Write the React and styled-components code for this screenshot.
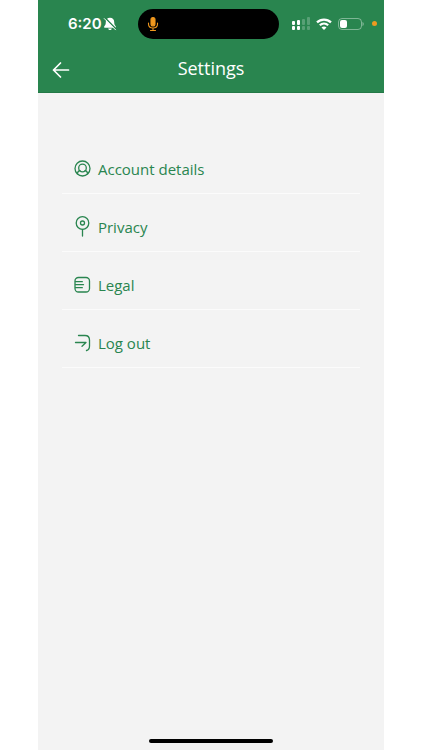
import React from "react";
import styled, { createGlobalStyle } from "styled-components";

const GlobalStyle = createGlobalStyle`
  * { box-sizing: border-box; }
  body { margin: 0; background: #ffffff; }
`;

const green = "#29854f";

const Page = styled.div`
  min-height: 100vh;
  padding: 0 9%;
  display: flex;
  background: #ffffff;
  font-family: "Open Sans", "Noto Sans", sans-serif;
`;

const Screen = styled.div`
  flex: 1;
  display: flex;
  flex-direction: column;
  background: #f3f3f3;
`;

const Header = styled.header`
  background: ${green};
  border-bottom: 1px solid #237846;
  color: #ffffff;
`;

const StatusBar = styled.div`
  display: grid;
  grid-template-columns: 1fr auto 1fr;
  align-items: center;
  height: 47px;
  padding-right: 5px;
`;

const Clock = styled.div`
  display: flex;
  align-items: center;
  gap: 1px;
  padding-left: 30px;
  font: 600 15px/20px Inter, sans-serif;
`;

const Island = styled.div`
  width: 141px;
  height: 30px;
  padding-left: 9px;
  display: flex;
  align-items: center;
  border-radius: 15px;
  background: #000000;
`;

const Indicators = styled.div`
  display: flex;
  align-items: center;
  justify-content: flex-end;
  gap: 6px;
`;

const RecordingDot = styled.span`
  width: 5px;
  height: 5px;
  margin: 0 2px;
  border-radius: 50%;
  background: #ee9a20;
`;

const TitleBar = styled.div`
  display: grid;
  grid-template-columns: 46px 1fr 46px;
  align-items: center;
  height: 45px;
`;

const BackButton = styled.button`
  display: flex;
  align-items: center;
  justify-content: center;
  height: 44px;
  padding: 0;
  border: 0;
  background: none;
  color: inherit;
  cursor: pointer;
`;

const Title = styled.h1`
  margin: 0;
  padding-bottom: 4px;
  font-size: 18px;
  font-weight: 400;
  line-height: 24px;
  text-align: center;
`;

const Menu = styled.nav`
  flex: 1;
  padding: 43px 24px 0;
`;

const MenuItem = styled.button`
  display: flex;
  align-items: center;
  gap: 7px;
  width: 100%;
  height: 58px;
  padding: 8px 0 0 12px;
  border: 0;
  border-bottom: 1px solid #fbfbfb;
  background: none;
  color: ${green};
  font: inherit;
  font-size: 15px;
  line-height: 20px;
  text-align: left;
  cursor: pointer;
`;

const Line = styled.svg.attrs({ fill: "none", stroke: "currentColor", "aria-hidden": true })`
  display: block;
  flex: none;
  stroke-width: ${(p) => p.$weight || 1.3};
  stroke-linecap: round;
  stroke-linejoin: round;
`;

const Solid = styled.svg.attrs({ fill: "currentColor", "aria-hidden": true })`
  display: block;
  flex: none;
`;

const HomeIndicator = styled.div`
  align-self: center;
  width: 124px;
  height: 4px;
  margin-bottom: 7px;
  border-radius: 2px;
  background: #000000;
`;

const BellOff = () => (
  <Solid width="14" height="14" viewBox="0 0 14 14">
    <path d="M7 .8c-2.700 0-4.200 1.900-4.200 4.300 0 2.400-.6 3.300-1.600 4.400-.4.500-.1 1.200.5 1.200h10.600c.6 0 .9-.7.5-1.200-1-1.100-1.600-2-1.600-4.400 0-2.400-1.500-4.300-4.200-4.300zM5.200 11.400c.2 1.100.9 1.700 1.800 1.700s1.600-.6 1.800-1.700z" />
    <path d="M2.200 1l10.800 11" stroke={green} strokeWidth="1.600" />
    <path d="M1.300 1.600l11.200 11.200" stroke="currentColor" strokeWidth="1" strokeLinecap="round" />
  </Solid>
);

const Microphone = () => (
  <Line width="12" height="16" viewBox="0 0 12 16" color="#f0981e" $weight={1.1}>
    <rect x="4" y="1.500" width="4" height="8.500" rx="2" fill="currentColor" />
    <path d="M1.500 7v1c0 2.700 1.900 4 4.500 4s4.500-1.300 4.500-4V7M6 12v2.500M3.500 14.500h5" />
  </Line>
);

const Signal = () => (
  <Solid width="18" height="14" viewBox="0 0 18 14">
    <rect x="0" y="4" width="3" height="4" rx="1" />
    <rect x="5" y="3" width="3" height="5" rx="1" />
    <rect x="0" y="9" width="3" height="4" rx="1" />
    <rect x="5" y="9" width="3" height="4" rx="1" />
    <g opacity=".22">
      <rect x="10" y="2" width="3" height="6" rx="1" />
      <rect x="15" y="0" width="3" height="8" rx="1" />
      <rect x="10" y="9" width="3" height="4" rx="1" />
      <rect x="15" y="9" width="3" height="4" rx="1" />
    </g>
  </Solid>
);

const Wifi = () => (
  <Line width="16" height="12" viewBox="0 0 16 12" $weight={2.2}>
    <path d="M1 4.400c3.900-3.800 10.100-3.800 14 0M3.800 7.300c2.400-2.200 6-2.200 8.400 0" strokeLinecap="butt" />
    <path d="M8 12L5.500 9.500c1.400-1.200 3.600-1.200 5 0z" fill="currentColor" stroke="none" />
  </Line>
);

const Battery = () => (
  <Solid width="26" height="12" viewBox="0 0 26 12">
    <rect x=".5" y=".5" width="23" height="11" rx="3.500" fill="none" stroke="currentColor" opacity=".4" />
    <rect x="2" y="2" width="7" height="8" rx="2" />
    <path d="M24.500 4c1.600.5 1.600 3.500 0 4z" opacity=".45" />
  </Solid>
);

const BackArrow = () => (
  <Line width="18" height="18" viewBox="0 0 18 18" $weight={1.7}>
    <path d="M16.500 9H1.500M8.500 2l-7 7 7 7" />
  </Line>
);

const AccountIcon = () => (
  <Line width="17" height="22" viewBox="0 0 17 22">
    <circle cx="8.500" cy="10.500" r="7.500" />
    <circle cx="8.500" cy="10" r="3.800" />
    <path d="M3.400 15.800c.2-1.800 1.100-2.900 2.600-3.100M13.600 15.800c-.2-1.800-1.100-2.900-2.600-3.100" />
  </Line>
);

const PrivacyIcon = () => (
  <Line width="17" height="22" viewBox="0 0 17 22">
    <circle cx="8.500" cy="7" r="6.300" />
    <circle cx="8.500" cy="7" r="2" />
    <path d="M8.500 13.500v6.500" />
  </Line>
);

const LegalIcon = () => (
  <Line width="17" height="22" viewBox="0 0 17 22">
    <rect x="1" y="3.500" width="14.500" height="14.500" rx="3.500" />
    <path d="M1.500 7.700h6.800M1.500 10.700h8M1.500 13.700h6.800" />
  </Line>
);

const LogoutIcon = () => (
  <Line width="17" height="22" viewBox="0 0 17 22">
    <path d="M4.500 3.500h6.500c3 0 4.500 1.500 4.500 4.500v6c0 2.500-1 4-3 4.500M1.500 10.500h10.500l-4 3.800" />
  </Line>
);

const items = [
  { label: "Account details", Icon: AccountIcon },
  { label: "Privacy", Icon: PrivacyIcon },
  { label: "Legal", Icon: LegalIcon },
  { label: "Log out", Icon: LogoutIcon },
];

export default function App() {
  return (
    <>
      <GlobalStyle />
      <Page>
        <Screen>
          <Header>
            <StatusBar>
              <Clock>
                6:20
                <BellOff />
              </Clock>
              <Island>
                <Microphone />
              </Island>
              <Indicators>
                <Signal />
                <Wifi />
                <Battery />
                <RecordingDot />
              </Indicators>
            </StatusBar>
            <TitleBar>
              <BackButton type="button" aria-label="Back">
                <BackArrow />
              </BackButton>
              <Title>Settings</Title>
            </TitleBar>
          </Header>
          <Menu aria-label="Settings">
            {items.map(({ label, Icon }) => (
              <MenuItem key={label} type="button">
                <Icon />
                {label}
              </MenuItem>
            ))}
          </Menu>
          <HomeIndicator />
        </Screen>
      </Page>
    </>
  );
}
